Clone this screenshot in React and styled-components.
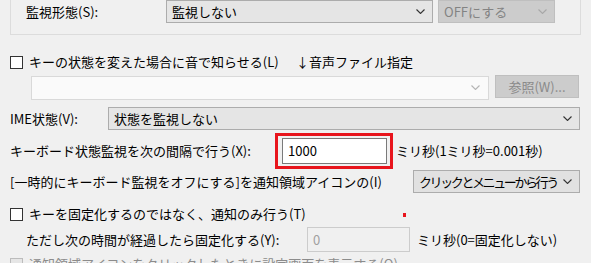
import styled, { createGlobalStyle } from "styled-components";

const GlobalStyle = createGlobalStyle`
  html, body {
    margin: 0;
    padding: 0;
    background: #f0f0f0;
  }
  body {
    font-family: "Noto Sans CJK JP", "Noto Sans", sans-serif;
    font-size: 13px;
    color: #000;
  }
`;

const Chevron = ({ color = "#333" }) => (
  <svg width="9" height="5" viewBox="0 0 9 5">
    <path d="M0.5 0.5 L4.5 4.5 L8.5 0.5" fill="none" stroke={color} strokeWidth="1.1" />
  </svg>
);

const App = () => {
  return (
    <Page>
      <GlobalStyle />

      <GroupBox>
        <Row $height={23}>
          <Label $width={140}>監視形態(S):</Label>
          <Combo $width={267}>
            <span>監視しない</span>
            <Chevron />
          </Combo>
          <Combo $width={117} $disabled $gap={5}>
            <span>OFFにする</span>
            <Chevron color="#a8a8a8" />
          </Combo>
        </Row>
      </GroupBox>

      <Row $height={18} $top={18}>
        <CheckBox />
        <Label $width={267} $indent={6}>キーの状態を変えた場合に音で知らせる(L)</Label>
        <Label>↓音声ファイル指定</Label>
      </Row>

      <Row $height={25} $top={4} $indent={21}>
        <FileCombo>
          <Chevron color="#b4b4b4" />
        </FileCombo>
        <Button disabled>参照(W)...</Button>
      </Row>

      <Row $height={23} $top={7}>
        <Label $width={98}>IME状態(V):</Label>
        <Combo $width={472}>
          <span>状態を監視しない</span>
          <Chevron />
        </Combo>
      </Row>

      <Row $height={36} $top={3}>
        <Label $width={265}>キーボード状態監視を次の間隔で行う(X):</Label>
        <Highlight>
          <TextInput>1000</TextInput>
        </Highlight>
        <Label $indent={3}>ミリ秒(1ミリ秒=0.001秒)</Label>
      </Row>

      <Row $height={23} $top={1}>
        <Label $width={403}>[一時的にキーボード監視をオフにする]を通知領域アイコンの(I)</Label>
        <Combo $width={167} $light>
          <ComboText $tight>クリックとメニューから行う</ComboText>
          <Chevron />
        </Combo>
      </Row>

      <Row $height={18} $top={12}>
        <CheckBox />
        <Label $indent={6}>キーを固定化するのではなく、通知のみ行う(T)</Label>
      </Row>

      <Row $height={25} $top={4} $indent={16}>
        <Label $width={281}>ただし次の時間が経過したら固定化する(Y):</Label>
        <TextInput $disabled $width={103} $height={25}>0</TextInput>
        <Label $indent={7}>ミリ秒(0=固定化しない)</Label>
      </Row>

      <Row $height={18} $top={3}>
        <CheckBox $disabled />
        <Label $indent={6} $muted>通知領域アイコンをクリックしたときに設定画面を表示する(O)</Label>
      </Row>

      <Marker />
    </Page>
  );
};

const Page = styled.div`
  position: relative;
  width: 591px;
  height: 263px;
  overflow: hidden;
  box-sizing: border-box;
  padding-left: 10px;
  background: #f0f0f0;
  display: flex;
  flex-direction: column;
`;

const GroupBox = styled.div`
  width: 571px;
  height: 35px;
  box-sizing: border-box;
  border: 1px solid #dcdcdc;
  border-top: none;
  padding-left: 15px;
  flex-shrink: 0;
`;

const Row = styled.div`
  display: flex;
  align-items: center;
  flex-shrink: 0;
  height: ${({ $height }) => $height}px;
  margin-top: ${({ $top = 0 }) => $top}px;
  padding-left: ${({ $indent = 0 }) => $indent}px;
`;

const Label = styled.span`
  flex-shrink: 0;
  white-space: nowrap;
  line-height: 16px;
  width: ${({ $width }) => ($width ? `${$width}px` : "auto")};
  margin-left: ${({ $indent = 0 }) => $indent}px;
  color: ${({ $muted }) => ($muted ? "#8c8c8c" : "#000")};
`;

const Combo = styled.div`
  flex-shrink: 0;
  box-sizing: border-box;
  display: flex;
  align-items: center;
  justify-content: space-between;
  width: ${({ $width }) => $width}px;
  height: 23px;
  margin-left: ${({ $gap = 0 }) => $gap}px;
  padding: 0 7px 0 5px;
  line-height: 16px;
  white-space: nowrap;
  overflow: hidden;
  border: 1px solid ${({ $disabled }) => ($disabled ? "#bfbfbf" : "#acacac")};
  background: ${({ $disabled, $light }) =>
    $disabled ? "#cccccc" : $light ? "#e1e1e1" : "#e5e5e5"};
  color: ${({ $disabled }) => ($disabled ? "#838383" : "#000")};
`;

const ComboText = styled.span`
  white-space: nowrap;
  letter-spacing: ${({ $tight }) => ($tight ? "-2.4px" : "0")};
`;

const FileCombo = styled.div`
  box-sizing: border-box;
  width: 458px;
  height: 24px;
  display: flex;
  align-items: center;
  justify-content: flex-end;
  padding-right: 8px;
  border: 1px solid #d9d9d9;
  background: #fafafa;
`;

const Button = styled.button`
  box-sizing: border-box;
  width: 84px;
  height: 23px;
  margin-left: 6px;
  align-self: flex-start;
  padding: 0;
  font-family: inherit;
  font-size: 13px;
  line-height: 16px;
  border: 1px solid #bfbfbf;
  background: #cccccc;
  color: #8a8a8a;
`;

const CheckBox = styled.span`
  flex-shrink: 0;
  box-sizing: border-box;
  width: 13px;
  height: 13px;
  border: 1px solid ${({ $disabled }) => ($disabled ? "#bcbcbc" : "#333")};
  background: ${({ $disabled }) => ($disabled ? "#e6e6e6" : "#fff")};
`;

const Highlight = styled.div`
  flex-shrink: 0;
  box-sizing: border-box;
  width: 118px;
  height: 36px;
  border: 3px solid #e8141c;
  padding: 2px 3px 0 4px;
`;

const TextInput = styled.div`
  flex-shrink: 0;
  box-sizing: border-box;
  display: flex;
  align-items: center;
  width: ${({ $width = 105 }) => $width}px;
  height: ${({ $height = 26 }) => $height}px;
  padding-left: 5px;
  line-height: 16px;
  border: 1px solid ${({ $disabled }) => ($disabled ? "#cccccc" : "#7a7a7a")};
  background: ${({ $disabled }) => ($disabled ? "#f0f0f0" : "#fff")};
  color: ${({ $disabled }) => ($disabled ? "#a0a0a0" : "#000")};
`;

const Marker = styled.span`
  position: absolute;
  left: 403px;
  top: 213px;
  width: 3px;
  height: 4px;
  background: #e8141c;
`;

export default App;
